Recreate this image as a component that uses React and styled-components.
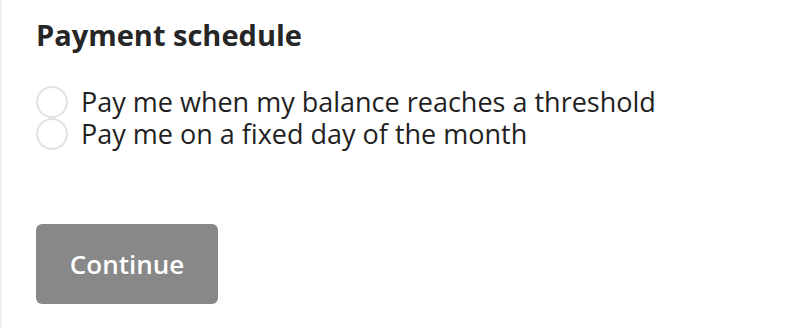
import React from 'react'
import styled, { createGlobalStyle } from 'styled-components'

const GlobalStyle = createGlobalStyle`
  body {
    margin: 0;
    background: #fff;
    font-family: "Open Sans", "Noto Sans", sans-serif;
  }
`

export const Panel = styled.form`
  box-sizing: border-box;
  width: 786px;
  height: 328px;
  border-left: 2px solid #efefef;
  padding: 17px 34px 0;
  display: flex;
  flex-direction: column;
  color: #222;
`

export const Title = styled.h2`
  margin: 0;
  font-size: 29px;
  font-weight: 700;
  line-height: 36px;
  color: #262626;
`

export const Options = styled.div`
  display: flex;
  flex-direction: column;
  margin-top: 33px;
`

export const Option = styled.label`
  display: flex;
  align-items: center;
  gap: 13px;
  height: 32px;
  font-size: 27px;
  line-height: 32px;
  color: #1f1f1f;
  cursor: pointer;
`

export const Radio = styled.input.attrs({ type: 'radio' })`
  appearance: none;
  margin: 0;
  width: 32px;
  height: 32px;
  border-radius: 50%;
  border: 2px solid #e2e2e2;
  box-sizing: border-box;
  background: #fff;
  flex-shrink: 0;
`

export const Button = styled.button`
  margin-top: 74px;
  width: 182px;
  height: 80px;
  border: none;
  border-radius: 6px;
  background: #888888;
  color: #fff;
  font-family: inherit;
  font-size: 26px;
  font-weight: 600;
  cursor: pointer;
`

export default function App() {
  return (
    <>
      <GlobalStyle />
      <Panel onSubmit={e => e.preventDefault()}>
        <Title>Payment schedule</Title>
        <Options>
          <Option>
            <Radio name="schedule" />
            Pay me when my balance reaches a threshold
          </Option>
          <Option>
            <Radio name="schedule" />
            Pay me on a fixed day of the month
          </Option>
        </Options>
        <Button type="submit">Continue</Button>
      </Panel>
    </>
  )
}
